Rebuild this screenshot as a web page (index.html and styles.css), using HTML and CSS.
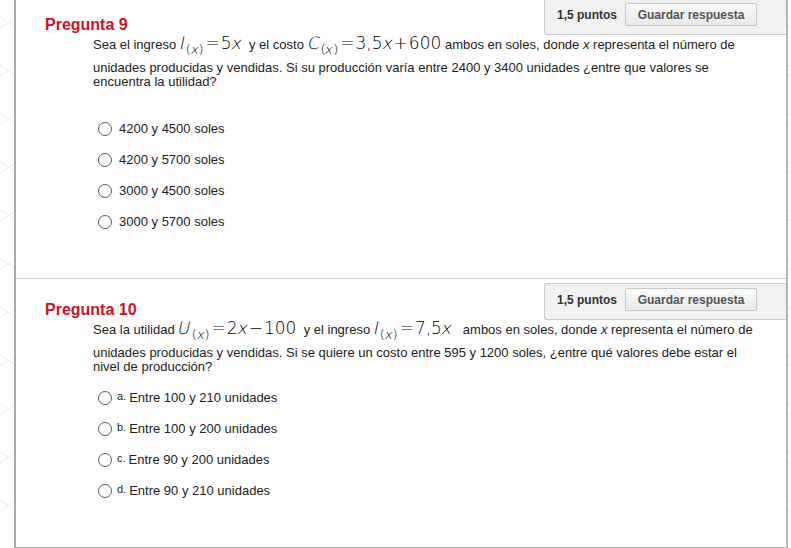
FILE: index.html
```html
<!DOCTYPE html>
<html lang="es">
<head>
<meta charset="utf-8">
<title>Preguntas</title>
<link rel="stylesheet" href="styles.css">
</head>
<body>
<div class="page">
  <section class="card card-first">
    <div class="head">
      <h2 class="title">Pregunta 9</h2>
      <div class="grade">
        <span class="pts">1,5 puntos</span>
        <button class="save" type="button">Guardar respuesta</button>
      </div>
    </div>
    <div class="body">
      <p class="q">Sea el ingreso <span class="m"><span class="v">I</span><span class="sb">(<span class="v">x</span>)</span><span class="op">=</span>5<span class="v">x</span></span>&nbsp; y el costo <span class="m"><span class="v">C</span><span class="sb">(<span class="v">x</span>)</span><span class="op">=</span>3,5<span class="v">x</span><span class="op">+</span>600</span> ambos en soles, donde <i>x</i> representa el número de<br>unidades producidas y vendidas. Si su producción varía entre 2400 y 3400 unidades ¿entre que valores se<br>encuentra la utilidad?</p>
      <ul class="opts opts-gap">
        <li class="opt"><span class="radio"></span><span class="txt">4200 y 4500 soles</span></li>
        <li class="opt"><span class="radio"></span><span class="txt">4200 y 5700 soles</span></li>
        <li class="opt"><span class="radio"></span><span class="txt">3000 y 4500 soles</span></li>
        <li class="opt"><span class="radio"></span><span class="txt">3000 y 5700 soles</span></li>
      </ul>
    </div>
  </section>
  <section class="card">
    <div class="head">
      <h2 class="title">Pregunta 10</h2>
      <div class="grade">
        <span class="pts">1,5 puntos</span>
        <button class="save" type="button">Guardar respuesta</button>
      </div>
    </div>
    <div class="body">
      <p class="q">Sea la utilidad <span class="m"><span class="v">U</span><span class="sb">(<span class="v">x</span>)</span><span class="op">=</span>2<span class="v">x</span><span class="op">−</span>100</span>&nbsp; y el ingreso <span class="m"><span class="v">I</span><span class="sb">(<span class="v">x</span>)</span><span class="op">=</span>7,5<span class="v">x</span></span>&nbsp;&nbsp; ambos en soles, donde <i>x</i> representa el número de<br>unidades producidas y vendidas. Si se quiere un costo entre 595 y 1200 soles, ¿entre qué valores debe estar el<br>nivel de producción?</p>
      <ul class="opts">
        <li class="opt"><span class="radio"></span><span class="let">a.</span><span class="txt2">Entre 100 y 210 unidades</span></li>
        <li class="opt"><span class="radio"></span><span class="let">b.</span><span class="txt2">Entre 100 y 200 unidades</span></li>
        <li class="opt"><span class="radio"></span><span class="let">c.</span><span class="txt2">Entre 90 y 200 unidades</span></li>
        <li class="opt"><span class="radio"></span><span class="let">d.</span><span class="txt2">Entre 90 y 210 unidades</span></li>
      </ul>
    </div>
  </section>
</div>
</body>
</html>
```

FILE: styles.css
```css
* { box-sizing: border-box; }

html, body {
  margin: 0;
  padding: 0;
}

body {
  font-family: "Liberation Sans", Arial, sans-serif;
  color: #222;
  background-color: #fff;
  background-image:
    repeating-linear-gradient(32deg, transparent 0 40px, #eeeeee 40px 41px),
    repeating-linear-gradient(-32deg, transparent 0 40px, #eeeeee 40px 41px);
  height: 548px;
  overflow: hidden;
}

.page {
  margin: -6px 0 0 14px;
  width: 774px;
  background: #fff;
  border-left: 2px solid #a9a9a9;
  border-right: 2px solid #b4b4b4;
  border-bottom: 1px solid #bdbdbd;
}

.card {
  padding-top: 4px;
  padding-bottom: 41px;
  border-bottom: 1px solid #cfcfcf;
}

.card:last-child {
  border-bottom: none;
}

.card-first {
  padding-bottom: 41px;
}

.head {
  display: flex;
  justify-content: space-between;
  align-items: flex-end;
}

.title {
  margin: 0 0 1px 29px;
  font-size: 16px;
  line-height: 18px;
  font-weight: bold;
  color: #d0101f;
}

.grade {
  display: flex;
  align-items: center;
  width: 242px;
  padding: 4px 0 8px 12px;
  background: #f1f1f1;
  border: 1px solid #cccccc;
  border-right: none;
  border-radius: 3px 0 0 3px;
}

.pts {
  font-size: 12px;
  font-weight: bold;
  color: #333;
  margin-right: 8px;
}

.save {
  width: 132px;
  height: 23px;
  padding: 0;
  font-family: "Liberation Sans", Arial, sans-serif;
  font-size: 12px;
  font-weight: bold;
  color: #555;
  background: linear-gradient(#fafafa, #e8e8e8);
  border: 1px solid #c9c9c9;
  border-radius: 2px;
}

.body {
  padding-left: 77px;
}

.q {
  margin: 0;
  font-size: 13px;
  line-height: 14px;
  color: #222;
  white-space: nowrap;
}

.m {
  display: inline-block;
  font-family: "DejaVu Sans", sans-serif;
  font-weight: 200;
  font-size: 17px;
  line-height: 16px;
  padding-bottom: 10px;
  color: #000;
}

.v {
  display: inline-block;
  font-style: normal;
  transform: skewX(-12deg);
}

.sb {
  display: inline-block;
  font-size: 13px;
  line-height: 0;
  vertical-align: -5px;
  margin: 0 1px;
}

.op {
  margin: 0 1px;
}

.opts {
  list-style: none;
  margin: 8px 0 0 5px;
  padding: 0;
}

.opts-gap {
  margin-top: 24px;
}

.opt {
  display: flex;
  align-items: center;
  height: 31px;
  font-size: 13px;
  color: #222;
}

.radio {
  width: 14px;
  height: 14px;
  border: 1px solid #5a5a5a;
  border-radius: 50%;
  background: #fff;
  margin-right: 5px;
  flex: none;
}

.txt {
  margin-left: 2px;
}

.let {
  font-size: 11px;
  position: relative;
  top: -2px;
  margin-right: 3px;
}
```
